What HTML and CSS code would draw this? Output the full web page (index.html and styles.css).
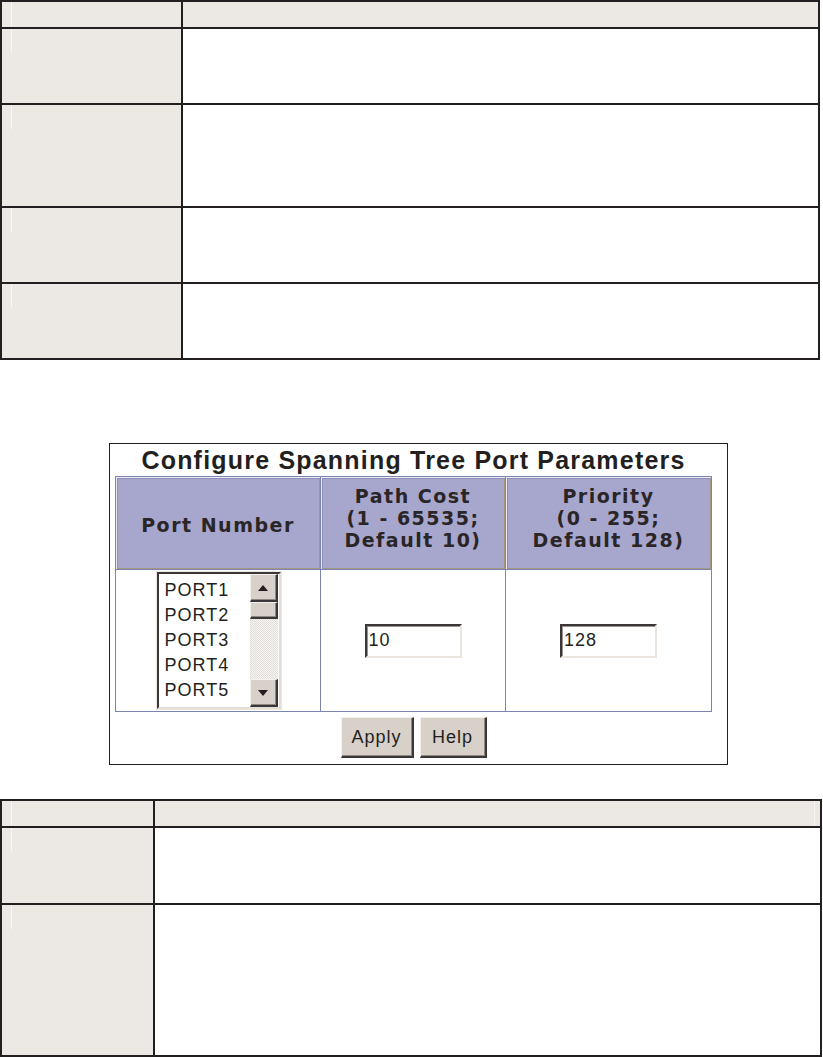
FILE: index.html
```html
<!DOCTYPE html>
<html>
<head>
<meta charset="utf-8">
<link rel="stylesheet" href="styles.css">
</head>
<body>
<div class="spec spec-top">
  <div class="cell head mark"></div>
  <div class="cell head"></div>
  <div class="cell key mark"></div>
  <div class="cell val"></div>
  <div class="cell key mark"></div>
  <div class="cell val"></div>
  <div class="cell key mark"></div>
  <div class="cell val"></div>
  <div class="cell key mark"></div>
  <div class="cell val"></div>
</div>

<section class="panel">
  <h2 class="panel-title">Configure Spanning Tree Port Parameters</h2>
  <div class="ptable">
    <div class="th th-single">Port Number</div>
    <div class="th th-multi">Path Cost<br>(1 - 65535;<br>Default 10)</div>
    <div class="th th-multi">Priority<br>(0 - 255;<br>Default 128)</div>
    <div class="td">
      <div class="listbox">
        <div class="items">
          <div>PORT1</div>
          <div>PORT2</div>
          <div>PORT3</div>
          <div>PORT4</div>
          <div>PORT5</div>
        </div>
        <div class="scroll">
          <div class="sbtn"><span class="arrow-up"></span></div>
          <div class="thumb"></div>
          <div class="track"></div>
          <div class="sbtn"><span class="arrow-down"></span></div>
        </div>
      </div>
    </div>
    <div class="td"><input class="field" type="text" value="10"></div>
    <div class="td"><input class="field" type="text" value="128"></div>
  </div>
  <div class="actions">
    <button class="btn btn-apply">Apply</button>
    <button class="btn btn-help">Help</button>
  </div>
</section>

<div class="spec spec-bottom">
  <div class="cell head mark"></div>
  <div class="cell head mark-right"></div>
  <div class="cell key mark"></div>
  <div class="cell val"></div>
  <div class="cell key mark"></div>
  <div class="cell val"></div>
</div>
</body>
</html>
```

FILE: styles.css
```css
html, body {
  margin: 0;
  padding: 0;
  background: #ffffff;
}

body {
  width: 823px;
  height: 1057px;
  overflow: hidden;
  font-family: "Liberation Sans", Arial, sans-serif;
  color: #231f20;
}

/* ---------- spec tables ---------- */
.spec {
  display: grid;
  box-sizing: border-box;
  border-top: 2px solid #231f20;
  border-left: 2px solid #231f20;
}

.spec-top {
  width: 820px;
  grid-template-columns: 181px 1fr;
  grid-template-rows: 27px 76px 103px 76px 76px;
}

.spec-bottom {
  width: 822px;
  margin-top: 34px;
  grid-template-columns: 153px 1fr;
  grid-template-rows: 27px 77px 152px;
}

.cell {
  box-sizing: border-box;
  border-right: 2px solid #231f20;
  border-bottom: 2px solid #231f20;
}

.head,
.key {
  background-color: #ece9e4;
}

.val {
  background-color: #ffffff;
}

.mark {
  background-image: linear-gradient(#f8f7f5, #f8f7f5);
  background-repeat: no-repeat;
  background-position: 9px 0;
  background-size: 1px 24px;
}

.mark-right {
  background-image: linear-gradient(#f6f4f2, #f6f4f2);
  background-repeat: no-repeat;
  background-position: right 5px top 0;
  background-size: 1px 25px;
}

/* ---------- screenshot panel ---------- */
.panel {
  box-sizing: border-box;
  width: 619px;
  height: 322px;
  margin: 83px 0 0 109px;
  padding: 0 0 0 5px;
  border: 1px solid #231f20;
  background: #ffffff;
}

.panel-title {
  width: 597px;
  height: 32px;
  margin: 0;
  box-sizing: border-box;
  padding: 2px 0 2px 0;
  text-align: center;
  font-family: "Liberation Sans", Arial, sans-serif;
  font-weight: bold;
  font-size: 25px;
  line-height: 28px;
  letter-spacing: 1.2px;
  color: #231f20;
  white-space: nowrap;
}

.ptable {
  display: grid;
  box-sizing: border-box;
  width: 597px;
  grid-template-columns: 204px 184px 205px;
  grid-template-rows: 92px 141px;
  gap: 1px;
  padding: 1px;
  background: #7b83b3;
}

.th {
  box-sizing: border-box;
  display: flex;
  align-items: center;
  justify-content: center;
  text-align: center;
  background: #a7a6cd;
  box-shadow: inset 1px 1px 0 #eeedf4, inset 2px 2px 0 #8f8db8, inset -1px -1px 0 #a69880;
  font-family: "DejaVu Sans", Verdana, sans-serif;
  font-weight: bold;
  font-size: 19px;
  line-height: 22px;
  letter-spacing: 1.5px;
  color: #2a2526;
}

.th-single {
  padding-top: 4px;
}

.th-multi {
  padding-bottom: 10px;
}

.td {
  display: flex;
  align-items: center;
  justify-content: center;
  background: #ffffff;
}

/* listbox */
.listbox {
  display: flex;
  box-sizing: border-box;
  width: 124px;
  height: 137px;
  border: 2px solid;
  border-color: #3b3637 #e4ded8 #e4ded8 #3b3637;
  box-shadow: 0 0 0 1px #ece6e0;
  background: #ffffff;
  margin-left: 1px;
}

.items {
  flex: 1;
  padding: 4px 0 0 6px;
  overflow: hidden;
  font-family: "Liberation Sans", Arial, sans-serif;
  font-size: 18px;
  line-height: 25px;
  letter-spacing: 1px;
  color: #231f20;
}

.scroll {
  display: flex;
  flex-direction: column;
  width: 28px;
  margin-right: 1px;
}

.sbtn,
.thumb {
  box-sizing: border-box;
  background: #d8d1ca;
  border: solid;
  border-width: 1px 2px 2px 1px;
  border-color: #f4f0ec #3b3637 #3b3637 #f4f0ec;
  box-shadow: inset -1px -1px 0 #8f8883;
}

.sbtn {
  height: 28px;
  display: flex;
  align-items: center;
  justify-content: center;
}

.thumb {
  height: 17px;
}

.track {
  flex: 1;
  background-color: #f4f2ef;
  background-image: repeating-conic-gradient(#e2ddd8 0 25%, #f8f6f4 0 50%);
  background-size: 2px 2px;
}

.arrow-up {
  width: 0;
  height: 0;
  border-left: 5px solid transparent;
  border-right: 5px solid transparent;
  border-bottom: 6px solid #231f20;
}

.arrow-down {
  width: 0;
  height: 0;
  border-left: 5px solid transparent;
  border-right: 5px solid transparent;
  border-top: 6px solid #231f20;
}

/* text fields */
.field {
  box-sizing: border-box;
  width: 97px;
  height: 34px;
  margin: 0;
  padding: 0 0 0 2px;
  border: 2px solid;
  border-color: #3b3637 #ebe5df #ebe5df #3b3637;
  box-shadow: inset 1px 1px 0 #9a928c;
  background: #ffffff;
  outline: none;
  font-family: "Liberation Sans", Arial, sans-serif;
  font-size: 18px;
  letter-spacing: 1px;
  color: #231f20;
}

/* buttons */
.actions {
  display: flex;
  justify-content: center;
  gap: 6px;
  width: 597px;
  padding-top: 5px;
}

.btn {
  box-sizing: border-box;
  height: 41px;
  margin: 0;
  padding: 0;
  border: solid;
  border-width: 1px 2px 2px 1px;
  border-color: #f4f0ec #3b3637 #3b3637 #f4f0ec;
  box-shadow: inset -1px -1px 0 #8f8883;
  background: #d8d1ca;
  font-family: "Liberation Sans", Arial, sans-serif;
  font-size: 18px;
  letter-spacing: 1px;
  color: #231f20;
}

.btn-apply {
  width: 73px;
}

.btn-help {
  width: 67px;
}
```
